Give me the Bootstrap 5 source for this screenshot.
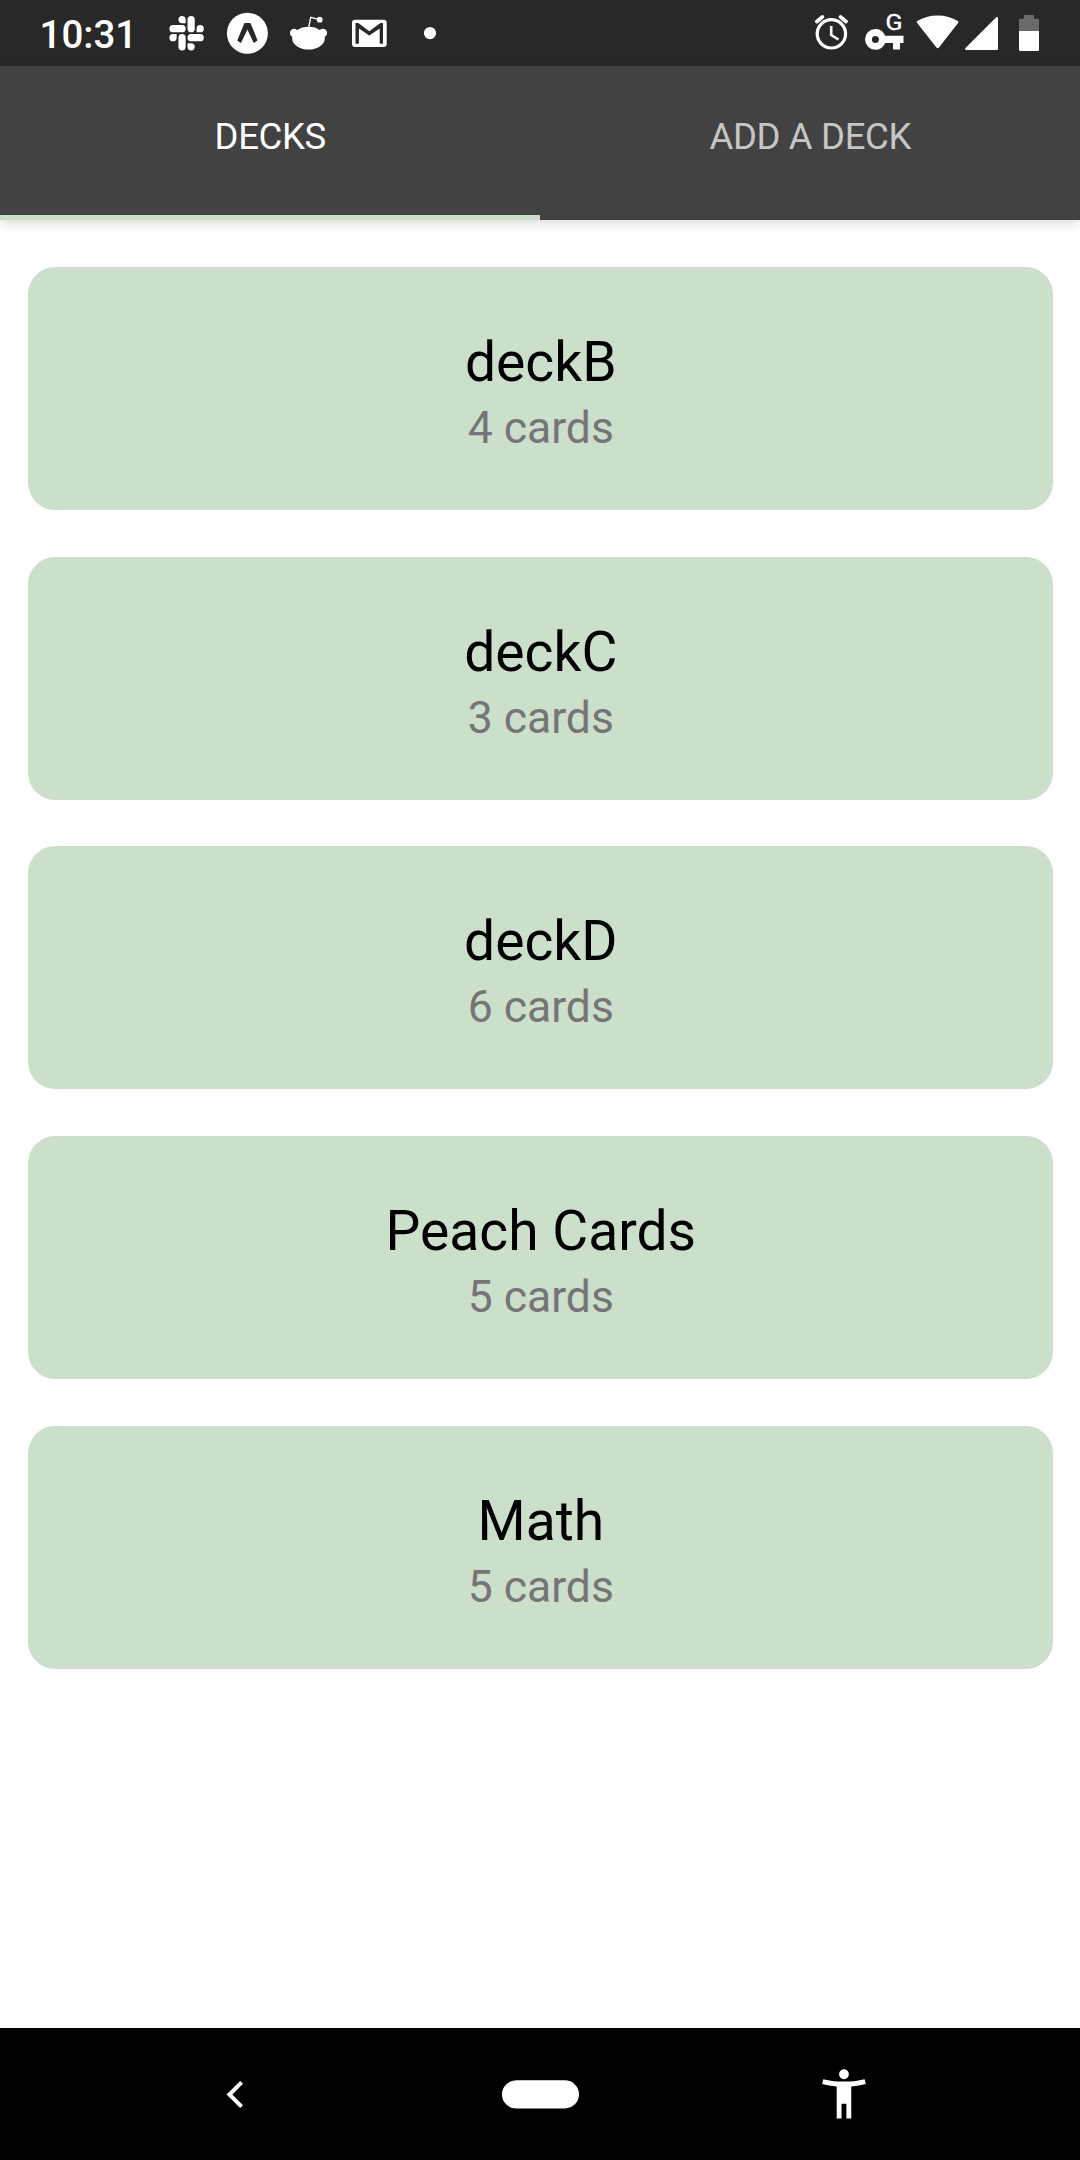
<!DOCTYPE html>
<html lang="en">
<head>
<meta charset="utf-8">
<meta name="viewport" content="width=device-width, initial-scale=1">
<title>Decks</title>
<link rel="stylesheet" href="https://cdn.jsdelivr.net/npm/bootstrap@5.3.0/dist/css/bootstrap.min.css">
<style>
  body { font-family: Roboto, "Liberation Sans", sans-serif; height: 2160px; overflow: hidden; }
  svg { display: block; flex: none; }
  .status-bar { height: 66px; background: #282828; padding-left: 39.5px; padding-right: 28px; }
  .clock { width: 116.5px; font-size: 38.5px; font-weight: 500; line-height: 66px; padding-top: 1.5px; white-space: nowrap; }
  .tab-bar { height: 154px; background: #424242; box-shadow: 0 3px 11px rgba(0,0,0,.15); }
  .tab-bar .nav-link { height: 154px; padding: 46px 0 0 .5px; font-size: 36.5px; line-height: 50px; color: #c6c6c6; border-radius: 0; border-bottom: 5px solid transparent; }
  .tab-bar .nav-link span { display: inline-block; letter-spacing: -.35px; }
  .tab-bar .nav-link.active { color: #fff; border-bottom-color: #ccdfcb; }
  .deck-list { padding: 46.9px 27px 0 28px; gap: 46.85px; }
  .deck { height: 242.9px; border-radius: 27px; background: #ccdfcb; padding: 62px 0 0 .6px; }
  .deck-name { font-size: 55.2px; line-height: 66px; color: #000; }
  .deck-count { font-size: 44.5px; line-height: 54px; padding-top: 6.1px; color: #757575; }
  .nav-keys { height: 132px; }
</style>
<script src="https://cdn.jsdelivr.net/npm/bootstrap@5.3.0/dist/js/bootstrap.bundle.min.js"></script>
</head>
<body class="d-flex flex-column bg-white">

<header class="status-bar d-flex flex-shrink-0 text-white">
  <div class="clock">10:31</div>
  <!-- Slack -->
  <svg width="61" height="66" viewBox="156 0 61 66" fill="#fff"><path transform="translate(169.4 16) scale(1.433)" d="M5.042 15.165a2.528 2.528 0 0 1-2.52 2.523A2.528 2.528 0 0 1 0 15.165a2.527 2.527 0 0 1 2.522-2.52h2.52zM6.313 15.165a2.527 2.527 0 0 1 2.521-2.52 2.527 2.527 0 0 1 2.521 2.52v6.313A2.528 2.528 0 0 1 8.834 24a2.528 2.528 0 0 1-2.521-2.522zM8.834 5.042a2.528 2.528 0 0 1-2.521-2.52A2.528 2.528 0 0 1 8.834 0a2.528 2.528 0 0 1 2.521 2.522v2.52zM8.834 6.313a2.528 2.528 0 0 1 2.521 2.521 2.528 2.528 0 0 1-2.521 2.521H2.522A2.528 2.528 0 0 1 0 8.834a2.528 2.528 0 0 1 2.522-2.521zM18.956 8.834a2.528 2.528 0 0 1 2.522-2.521A2.528 2.528 0 0 1 24 8.834a2.528 2.528 0 0 1-2.522 2.521h-2.522zM17.688 8.834a2.528 2.528 0 0 1-2.523 2.521 2.527 2.527 0 0 1-2.52-2.521V2.522A2.527 2.527 0 0 1 15.165 0a2.528 2.528 0 0 1 2.523 2.522zM15.165 18.956a2.528 2.528 0 0 1 2.523 2.522A2.528 2.528 0 0 1 15.165 24a2.527 2.527 0 0 1-2.52-2.522v-2.522zM15.165 17.688a2.527 2.527 0 0 1-2.52-2.523 2.526 2.526 0 0 1 2.52-2.52h6.313A2.527 2.527 0 0 1 24 15.165a2.528 2.528 0 0 1-2.522 2.523z"/></svg>
  <!-- Expo -->
  <svg width="61" height="66" viewBox="217 0 61 66"><circle cx="247.4" cy="33.3" r="20.5" fill="#fff"/><path fill="#282828" d="M244.9 23h5q.6 0 .9.7l6.7 16.6-3 2.5-1-.2-6.1-13.2-6.2 13.2-.9.2-3-2.3 6.8-16.8q.2-.7.8-.7z"/></svg>
  <!-- Reddit -->
  <svg width="61" height="66" viewBox="278 0 61 66" fill="#fff"><ellipse cx="308.5" cy="38.2" rx="16.3" ry="11.4"/><circle cx="294.1" cy="33" r="4.2"/><circle cx="322.9" cy="33" r="4.2"/><path d="M308.6 28l2.1-10.7 6.8 1.8" fill="none" stroke="#fff" stroke-width="1.3"/><circle cx="319.7" cy="19.7" r="2.9"/></svg>
  <!-- Gmail -->
  <svg width="61" height="66" viewBox="339 0 61 66"><rect x="352" y="19.7" width="34.7" height="27.2" rx="3" fill="#fff"/><path fill="#282828" d="M355.5 23h2.8l11 8.2 11.1-8.2h2.6v20.7h-3.3V28.4l-10.4 7.2-10.4-7.2v15.3h-3.4z"/></svg>
  <svg width="61" height="66" viewBox="400 0 61 66"><circle cx="430" cy="33.1" r="6.1" fill="#fff"/></svg>
  <!-- Alarm -->
  <svg class="ms-auto" width="48" height="66" viewBox="808 0 48 66" fill="none" stroke="#fff"><circle cx="831.4" cy="33.8" r="14.2" stroke-width="3.2"/><path d="M831.2 26v9l7.3 4.5" stroke-width="2.6"/><path d="M816.9 21.5l5.5-4.6M846 21.5l-5.5-4.6" stroke-width="3.8" stroke-linecap="round"/></svg>
  <!-- VPN key -->
  <svg width="56" height="66" viewBox="856 0 56 66" fill="#fff"><path fill-rule="evenodd" d="M875.4 29c4.6 0 8.2 2.7 9.7 6.8h18.4v7.2h-3.5v6.5h-7v-6.5h-7.9c-1.5 4-5.2 6.8-9.7 6.8a10.4 10.4 0 0 1 0-20.8zm0 6.9a3.5 3.5 0 1 0 0 7 3.5 3.5 0 0 0 0-7z"/><text x="885.4" y="30" font-size="22.5" stroke="#fff" stroke-width=".4" textLength="17" lengthAdjust="spacingAndGlyphs">G</text></svg>
  <!-- Wi-Fi -->
  <svg width="50" height="66" viewBox="912 0 50 66"><path fill="#fff" d="M917 22.8q-.8-1 .3-1.7c5.7-3.7 12.7-5.6 20.3-5.6s14.5 1.9 20.2 5.6q1.2.8.4 1.7l-19.2 24.6q-1.3 1.5-2.6 0z"/></svg>
  <!-- Signal -->
  <svg width="42" height="66" viewBox="962 0 42 66"><path fill="#fff" d="M996.5 17q1.5-.3 1.5 1.2v30.6q0 1.2-1.2 1.2h-30.6q-2-.3-.7-2z"/></svg>
  <!-- Battery -->
  <svg width="48" height="66" viewBox="1004 0 48 66"><path fill="#6a6a6a" d="M1024 15h10v3.7h3.5q1.5 0 1.5 1.5V31h-20V20.2q0-1.5 1.5-1.5h3.5z"/><path fill="#fff" d="M1019 31h20v18.500q0 1.500-1.500 1.500h-17q-1.500 0-1.500-1.500z"/></svg>
</header>

<nav class="tab-bar nav nav-justified flex-nowrap flex-shrink-0">
  <a class="nav-link active w-50" href="#"><span>DECKS</span></a>
  <a class="nav-link w-50" href="#"><span>ADD A DECK</span></a>
</nav>

<main class="deck-list d-flex flex-column flex-grow-1">
  <div class="deck card border-0 text-center"><div class="deck-name">deckB</div><div class="deck-count">4 cards</div></div>
  <div class="deck card border-0 text-center"><div class="deck-name">deckC</div><div class="deck-count">3 cards</div></div>
  <div class="deck card border-0 text-center"><div class="deck-name">deckD</div><div class="deck-count">6 cards</div></div>
  <div class="deck card border-0 text-center"><div class="deck-name">Peach Cards</div><div class="deck-count">5 cards</div></div>
  <div class="deck card border-0 text-center"><div class="deck-name">Math</div><div class="deck-count">5 cards</div></div>
</main>

<footer class="nav-keys d-flex flex-shrink-0 bg-black">
  <svg width="388" height="132" viewBox="0 2028 388 132"><path d="M241.6 2082.3l-12.2 12.2 12.2 12.2" fill="none" stroke="#fff" stroke-width="4"/></svg>
  <svg width="304" height="132" viewBox="388 2028 304 132"><rect x="502" y="2080.3" width="77" height="28.2" rx="14.1" fill="#fff"/></svg>
  <svg width="388" height="132" viewBox="692 2028 388 132"><path transform="translate(814.8 2064.4) scale(2.43 2.46)" fill="#fff" d="M20.5 6c-2.61.7-5.67 1-8.5 1s-5.89-.3-8.5-1L3 8c1.86.5 4 .83 6 1v13h2v-6h2v6h2V9c2-.17 4.14-.5 6-1zM12 6c1.1 0 2-.9 2-2s-.9-2-2-2-2 .9-2 2 .9 2 2 2z"/></svg>
</footer>
</body>
</html>
